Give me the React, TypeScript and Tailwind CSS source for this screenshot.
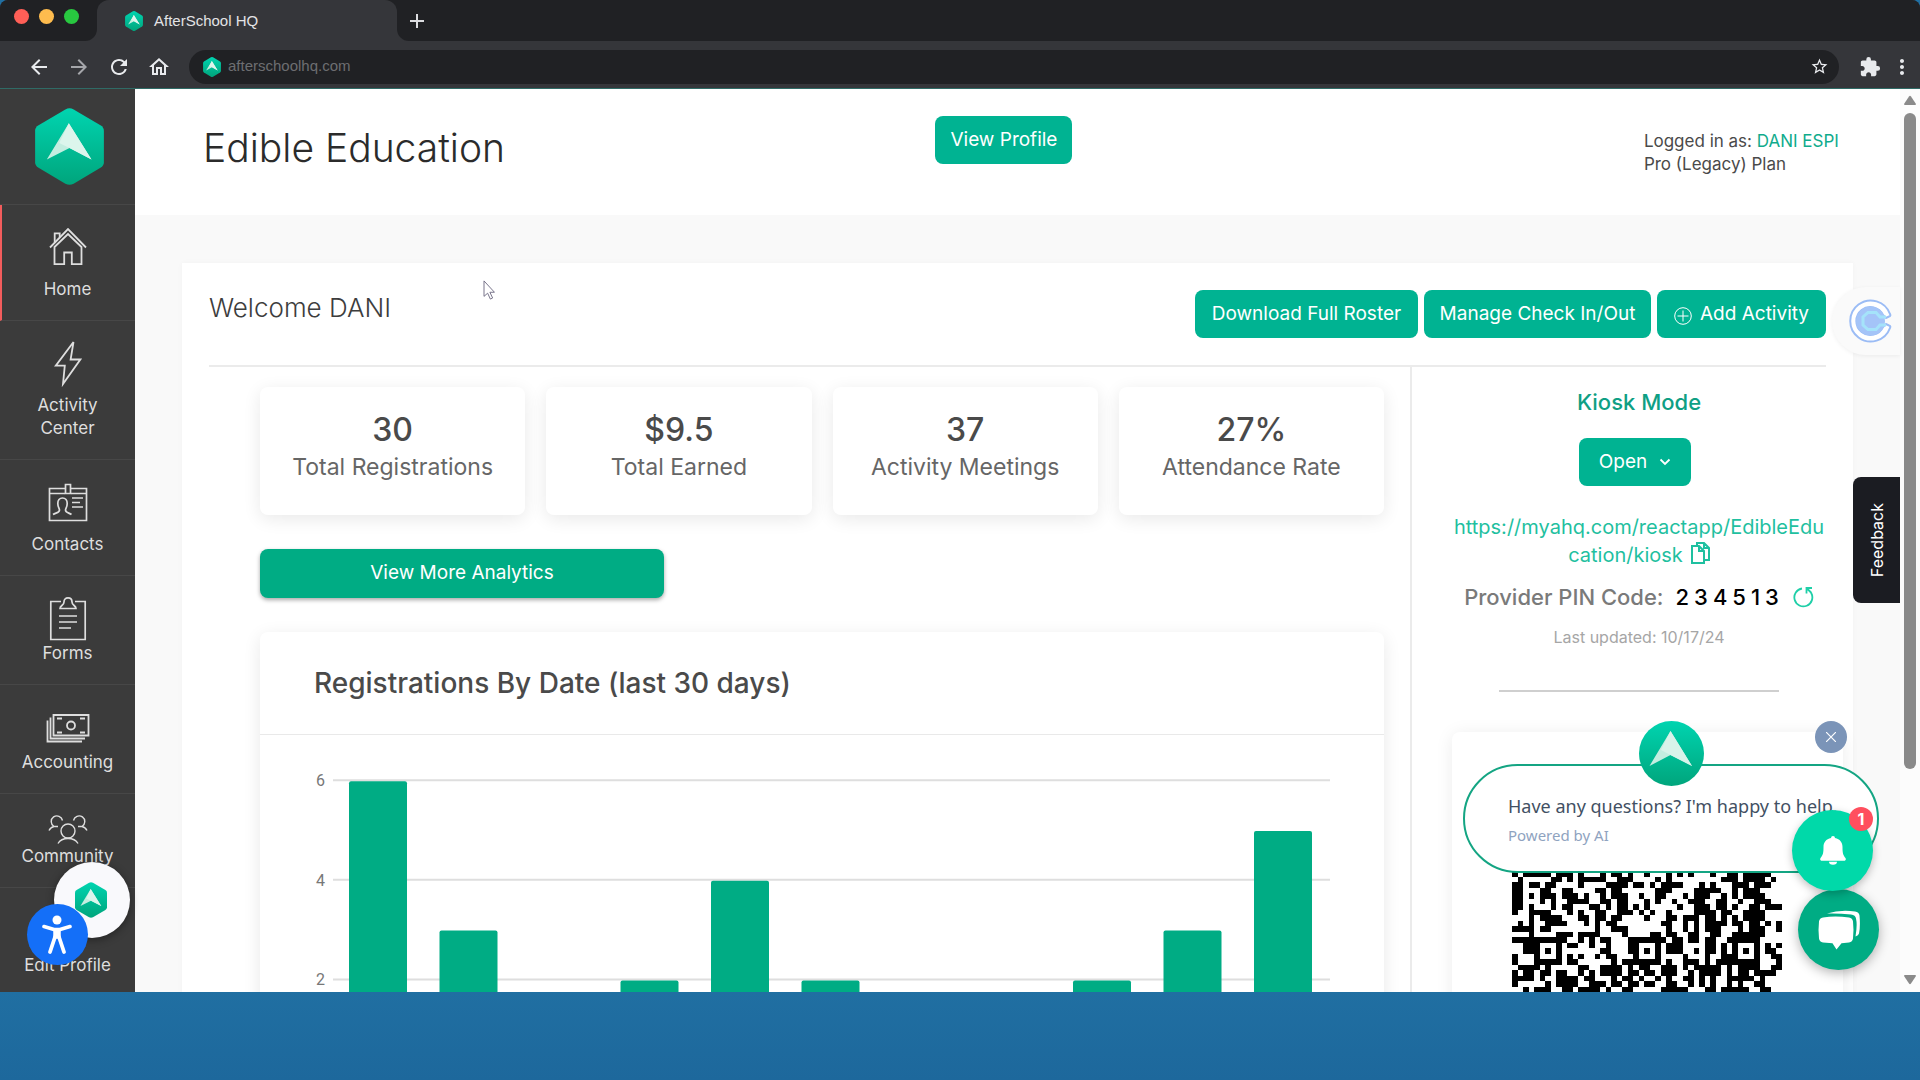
import type { ReactNode } from 'react';
import { MdArrowBack, MdArrowForward, MdExtension, MdMoreVert, MdOutlineHome, MdRefresh, MdStarBorder } from 'react-icons/md';

const navItems = [
  { label: 'Home', icon: <HomeIcon />, box: 'h-[53px]', active: true },
  { label: 'Activity Center', icon: <BoltIcon />, box: 'h-[53px]' },
  { label: 'Contacts', icon: <ContactsIcon />, box: 'h-[53px]' },
  { label: 'Forms', icon: <FormsIcon />, box: 'h-[46px]' },
  { label: 'Accounting', icon: <MoneyIcon />, box: 'h-[46px]' },
  { label: 'Community', icon: <CommunityIcon />, box: 'h-[31px]' },
  { label: 'Edit Profile', icon: <ProfileIcon />, box: 'h-[46px]' },
];

const stats = [
  { value: '30', label: 'Total Registrations' },
  { value: '$9.5', label: 'Total Earned' },
  { value: '37', label: 'Activity Meetings' },
  { value: '27%', label: 'Attendance Rate' },
];

const registrations = [6, 3, 0, 2, 4, 2, 0, 0, 2, 3, 5];

const qrRows = [
  '#.#####.###.#...#.##.#..#...#.#.#...#..##.#####..',
  '.#.....##.#.#####..###....#.#.........###.####.#..',
  '##.##.##....#....####.##.#.####...#.#...###.###..',
  '##...##..##....##.##......###....#####..#.###....',
  '##.#.###.###.#..#.###..#..##...#.###..#.#.####...',
  '##...#.#..####..##.##...#.#..#..###..##..#..###..',
  '##.#...#.##...##.#.##.#.#.....#..###.##.#..##.###',
  '#..####...#.#..##..###.#.#..#....####.##..####...',
  '...#.####...##.##.##....#...##.###.##.#.#.####...',
  '.#.#..####...#.#.##........##..#.#.####.##.##.#.#',
  '####.##........#..###.......#..#.#.###...#.###..#',
  '...#....###.####....#....##.##..##..##..######...',
  '##########..#.#.##...#######.##.##.##..######....',
  '..###...#.##..#..#...##...#.###....##.#.#...#.#.#',
  '..###.#.#.......##...##.#.#.###..#.##.#.#.#.#.##.',
  '#...#...#.#.#..#.##...#...#....#...#..###...#..##',
  '#...#####.##......#.#######.#..###.#.########...#',
  '.####.#.....##..####.#.##..###.#.#####.#.####..##',
  '#.##.##.##..#.#.####.##.##.###..#.####.#.##.####.',
  '####.#..####.##...#.##.#..#.#..##.#.#..#####.#...',
  '#.....#.####..###.##.##.##..##..#.#.#..#.#..##...',
  '..#.###..##.####.#..##.....#####...##.#####..##..',
];

function HomeIcon() {
  return (
    <svg width="38" height="42" viewBox="0 -2 38 42" fill="none" stroke="currentColor" strokeWidth="1.8">
      <path d="M1 20.500 19 2l18 18.500" />
      <path d="M5.500 20v17.200h9.700V25.500h7.600v11.700h9.700V20L19 7z" />
      <path d="M5.700 15.500V6.300h5v4" />
    </svg>
  );
}

function BoltIcon() {
  return (
    <svg width="28" height="46" viewBox="0 1 28 46" fill="none" stroke="currentColor" strokeWidth="1.800">
      <path d="M19.500 2 1.800 25.700h9L9 44l17.300-24.500h-9.700z" />
    </svg>
  );
}

function ContactsIcon() {
  return (
    <svg width="40" height="42" viewBox="0 0 40 42" fill="none" stroke="currentColor" strokeWidth="1.700">
      <path d="M17 8.500H1.500v32h37v-32H23M1.500 13.500H17M23 13.500h15.500" />
      <path d="M17.500 4.500h5v9h-5z" />
      <path d="M5 34.500c3-1.800 6.500-1.700 6.500-4.500 0-1.500-1.700-2.800-1.700-6.500 0-3 1.700-5.500 4.700-5.500s4.700 2.500 4.700 5.500c0 3.700-1.700 5-1.700 6.500 0 2.800 3.500 2.700 6 4.500M24 18h11M24 22.500h8M24 27h11" />
    </svg>
  );
}

function FormsIcon() {
  return (
    <svg width="38" height="45" viewBox="0 0 38 45" fill="none" stroke="currentColor" strokeWidth="1.700">
      <path d="M12 5.500H1.800v38h34.400v-38H26" />
      <path d="M11 12.500c0-3 4-3 4-6.500 0-2.500 1.500-4.200 4-4.200s4 1.700 4 4.200c0 3.500 4 3.500 4 6.500zM10 20h18M10 26h18M10 32h12" />
    </svg>
  );
}

function MoneyIcon() {
  return (
    <svg width="44" height="46" viewBox="0 0 44 46" fill="none" stroke="currentColor" strokeWidth="1.800">
      <path d="M7.500 10h35v20.500h-35z" />
      <path d="M4.500 12.500V33.500h34.500M1.500 15.500V36.500h34.500" />
      <circle cx="25" cy="20.500" r="4" />
      <path d="M11 13.500h5M34 13.500h5M11 27.500h5M34 27.500h5" />
    </svg>
  );
}

function CommunityIcon() {
  return (
    <svg width="40" height="31" viewBox="0 0 40 31" fill="none" stroke="currentColor" strokeWidth="1.400">
      <circle cx="20" cy="17" r="7" />
      <path d="M10 29.500c2-3.500 5-5 10-5s8 1.500 10 5M14.500 6.500A5.700 5.700 0 1 0 6 12.500c-2.500.5-4 2-5 4M25.500 6.500a5.700 5.700 0 1 1 8.500 6c2.500.5 4 2 5 4M6 12.500h4M34 12.500h-4" />
    </svg>
  );
}

function ProfileIcon() {
  return (
    <svg width="38" height="42" viewBox="0 0 38 42" fill="none" stroke="currentColor" strokeWidth="1.700">
      <circle cx="19" cy="12" r="9" />
      <path d="M8 41V32c0-5 4-8 11-8s11 3 11 8v9" />
    </svg>
  );
}

function Logo({ className }: { className: string }) {
  return (
    <svg className={className} viewBox="0 0 100 112" aria-hidden="true">
      <defs>
        <linearGradient id="hex" x1="0" y1="0" x2="0" y2="1">
          <stop offset="0" stopColor="#00d4b0" />
          <stop offset="1" stopColor="#00a57c" />
        </linearGradient>
      </defs>
      <path d="M44 2q6-3 12 0l39 23q5 3 5 8v46q0 5-5 8l-39 23q-6 3-12 0L5 87q-5-3-5-8V33q0-5 5-8z" fill="url(#hex)" />
      <path d="M49 22 82 75 50 58 17 75z" fill="#c4ede0" />
      <path d="M49 22 82 75 50 58 35 51z" fill="#dcf5ec" />
    </svg>
  );
}

function GreenButton({ className = '', children }: { className?: string; children: ReactNode }) {
  return (
    <button
      type="button"
      className={`flex h-12 items-center justify-center whitespace-nowrap rounded-lg bg-[#00b392] text-[19px] text-white ${className}`}
    >
      {children}
    </button>
  );
}

function BrowserBar() {
  return (
    <header className="overflow-hidden rounded-t-lg border-b border-[#2f6b66] bg-[#35363a] font-['Liberation_Sans',sans-serif]">
      <div className="flex h-[41px]">
        <div className="flex w-[97px] gap-[10px] rounded-br-xl bg-[#202124] pl-[14px] pt-[9px]">
          <span className="size-[15px] rounded-full bg-[#ff5f57]" />
          <span className="size-[15px] rounded-full bg-[#febc4e]" />
          <span className="size-[15px] rounded-full bg-[#28c840]" />
        </div>
        <div className="bg-[#202124]">
          <div className="flex h-full w-[300px] items-center gap-[11px] rounded-t-xl bg-[#35363a] pl-[28px] text-[15px] text-[#e3e3e5]">
            <Logo className="h-5 w-[18px]" />
            <span className="pt-[2px]">AfterSchool HQ</span>
          </div>
        </div>
        <div className="flex flex-1 rounded-bl-xl bg-[#202124]">
          <button type="button" aria-label="New tab" className="px-3 pt-px text-[#dcdde0]">
            <svg width="16" height="16" viewBox="0 0 16 16" stroke="currentColor" strokeWidth="2">
              <path d="M8 1v14M1 8h14" />
            </svg>
          </button>
        </div>
      </div>
      <div className="flex h-[47px] items-center pt-1 text-[#e8eaed]">
        <div className="flex w-[189px] items-center gap-4 pl-[27px]">
          <button type="button" aria-label="Back"><MdArrowBack size={24} /></button>
          <button type="button" aria-label="Forward" className="text-[#a5a6aa]"><MdArrowForward size={24} /></button>
          <button type="button" aria-label="Reload"><MdRefresh size={24} /></button>
          <button type="button" aria-label="Home"><MdOutlineHome size={24} /></button>
        </div>
        <div className="flex h-[34px] flex-1 items-center rounded-full bg-[#202124] pl-[14px] pr-[10px]">
          <Logo className="h-5 w-[18px]" />
          <input
            aria-label="Address"
            defaultValue="afterschoolhq.com"
            className="ml-[7px] flex-1 bg-transparent text-[15px] text-[#6d6e71] outline-none"
          />
          <button type="button" aria-label="Bookmark"><MdStarBorder size={19} /></button>
        </div>
        <button type="button" aria-label="Extensions" className="ml-5"><MdExtension size={22} /></button>
        <button type="button" aria-label="Menu" className="ml-[9px] mr-[6px]"><MdMoreVert size={24} /></button>
      </div>
    </header>
  );
}

function Sidebar() {
  return (
    <nav className="w-[135px] shrink-0 bg-[#3b3b3b] text-[#dedede]">
      <a href="#" aria-label="AfterSchool HQ" className="flex h-[116px] justify-center border-b border-[#474747] pl-1 pt-[19px]">
        <Logo className="h-[77px] w-[69px]" />
      </a>
      {navItems.map((item) => (
        <a
          key={item.label}
          href="#"
          className={`flex flex-col items-center border-b border-b-[#474747] px-4 pb-[19px] pt-5 text-center text-[17px] leading-[23px] ${
            item.active ? 'border-l-2 border-l-[#f25c5c] pl-[14px]' : ''
          }`}
        >
          <span className={item.box}>{item.icon}</span>
          {item.label}
        </a>
      ))}
    </nav>
  );
}

function RegistrationsChart() {
  return (
    <svg className="w-full" viewBox="0 0 1124 358" role="img" aria-label="Registrations by date">
      {[6, 4, 2].map((tick) => {
        const y = 344 - tick * 49.8;
        return (
          <g key={tick}>
            <path d={`M73 ${y}H1070`} stroke="#dedede" strokeWidth="2" />
            <text x="65" y={y + 6} textAnchor="end" className="fill-[#777777] font-[Roboto,sans-serif] text-[16px]">
              {tick}
            </text>
          </g>
        );
      })}
      {registrations.map((count, i) => (
        <rect key={i} x={89 + i * 90.5} y={345 - count * 49.8} width="58" height={count * 49.8} rx="2" fill="#00ac84" />
      ))}
    </svg>
  );
}

function Analytics() {
  return (
    <section className="flex-1 border-r-2 border-[#ebebeb] pl-[51px] pr-[26px] pt-5">
      <div className="grid grid-cols-4 gap-[21px]">
        {stats.map((stat) => (
          <div key={stat.label} className="h-32 rounded-lg bg-white pt-[21px] text-center shadow-[0_4px_18px_rgba(0,0,0,0.09)]">
            <p className="text-[32px] font-medium leading-[44px] text-[#4a4a4a]">{stat.value}</p>
            <p className="text-[23px] leading-[30px] text-[#666666]">{stat.label}</p>
          </div>
        ))}
      </div>
      <button
        type="button"
        className="mt-[34px] h-[49px] w-[404px] rounded-lg bg-[#00ac84] text-[19px] text-white shadow-[0_2px_4px_rgba(0,0,0,0.35)]"
      >
        View More Analytics
      </button>
      <div className="mt-[34px] rounded-lg bg-white shadow-[0_4px_18px_rgba(0,0,0,0.09)]">
        <h2 className="border-b border-[#e9e9e9] px-[54px] py-8 text-[28px] font-medium leading-[38px] text-[#4a4a4a]">
          Registrations By Date (last 30 days)
        </h2>
        <RegistrationsChart />
      </div>
    </section>
  );
}

function KioskPanel() {
  return (
    <section className="flex w-[414px] shrink-0 flex-col items-center pl-10">
      <h2 className="mt-[19px] text-[22px] font-medium leading-8 text-[#0f9f84]">Kiosk Mode</h2>
      <GreenButton className="mr-2 mt-5 w-28 gap-3">
        Open
        <svg width="12" height="8" viewBox="0 0 12 8" fill="none" stroke="currentColor" strokeWidth="1.800">
          <path d="m1.500 1.500 4.500 4.500 4.500-4.500" />
        </svg>
      </GreenButton>
      <a href="#" className="mt-[27px] text-center text-[20px] leading-7 text-[#1fc0a0]">
        https://myahq.com/reactapp/EdibleEdu
        <br />
        cation/kiosk
        <svg className="ml-2 inline-block align-[-2px]" width="19" height="22" viewBox="0 0 19 22" fill="none" stroke="currentColor" strokeWidth="2">
          <path d="M1 4h7l5 5v12H1zM6 4V1h7l5 5v12h-5M8 4v5h5M13 1v5h5" />
        </svg>
      </a>
      <div className="mt-3 flex items-center text-[22px] font-medium leading-8 text-[#7a7a7a]">
        Provider PIN Code:
        <span className="ml-3 flex gap-[5px] text-black">
          {'234513'.split('').map((digit, i) => (
            <span key={i}>{digit}</span>
          ))}
        </span>
        <button type="button" aria-label="Refresh PIN" className="ml-[14px] text-[#1fcfa8]">
          <svg width="21" height="22" viewBox="0 0 21 22" fill="none" stroke="currentColor" strokeWidth="1.800">
            <path d="M9 2.500a9 9 0 1 0 9.200 4.500" />
            <path d="M13.500 7.500V2h5.500M14 2.500l4.500 4.500" />
          </svg>
        </button>
      </div>
      <p className="mt-3 text-[16px] leading-6 text-[#a6a6a6]">Last updated: 10/17/24</p>
      <hr className="mt-[41px] w-[280px] border-t-2 border-[#cfcfcf]" />
      <div className="-mr-4 mt-10 flex w-[391px] justify-center rounded-lg bg-white pb-10 pt-[139px] shadow-[0_2px_18px_rgba(0,0,0,0.08)]">
        <svg width="270" height="121" viewBox="0 0 49 22" preserveAspectRatio="none" shapeRendering="crispEdges" role="img" aria-label="Kiosk QR code">
          {qrRows.map((row, y) =>
            row.split('').map((cell, x) => (cell === '#' ? <rect key={`${x}-${y}`} x={x} y={y} width="1" height="1" /> : null))
          )}
        </svg>
      </div>
    </section>
  );
}

function Dashboard() {
  return (
    <main className="min-w-0 flex-1 bg-[#f9f9f9]">
      <div className="grid h-[126px] grid-cols-[732fr_708fr_196fr] bg-white pl-[68px] pr-[60px] pt-[27px]">
        <h1 className="pt-[6px] text-[39px] font-light leading-[52px] text-[#2b2b2b]">Edible Education</h1>
        <div>
          <GreenButton className="w-[137px]">View Profile</GreenButton>
        </div>
        <p className="whitespace-nowrap pt-[14px] text-[17px] leading-[23px] text-[#4a4a4a]">
          Logged in as:{' '}
          <a href="#" className="text-[#10ab8c]">
            DANI ESPI
          </a>
          <br />
          Pro (Legacy) Plan
        </p>
      </div>
      <div className="mx-[47px] mt-12 bg-white px-[27px] pt-[27px] shadow-[0_0_6px_rgba(0,0,0,0.03)]">
        <div className="flex h-[77px] items-start gap-[6px] border-b-2 border-[#ebebeb]">
          <p className="flex-1 text-[26px] font-light leading-9 text-[#3d3d3d]">Welcome DANI</p>
          <GreenButton className="w-[223px]">Download Full Roster</GreenButton>
          <GreenButton className="w-[227px]">Manage Check In/Out</GreenButton>
          <GreenButton className="w-[169px] gap-2">
            <svg className="mt-1" width="18" height="18" viewBox="0 0 18 18" fill="none" stroke="currentColor" strokeWidth="1">
              <circle cx="9" cy="9" r="8.300" />
              <path d="M9 3.500v11M3.500 9h11" />
            </svg>
            Add Activity
          </GreenButton>
        </div>
        <div className="flex">
          <Analytics />
          <KioskPanel />
        </div>
      </div>
    </main>
  );
}

function Scrollbar() {
  return (
    <div className="flex w-5 shrink-0 flex-col items-center bg-[#fcfcfc] pb-[7px] pt-[6px]">
      <svg width="12" height="10" viewBox="0 0 12 10" fill="#8a8a8a">
        <path d="M5 1.500Q6 0 7 1.500L12 9q0 1-1 1H1Q0 10 0 9z" />
      </svg>
      <div className="mt-2 w-3 flex-[657] rounded-full bg-[#8a8a8a]" />
      <div className="flex-[206]" />
      <svg width="12" height="10" viewBox="0 0 12 10" fill="#8a8a8a">
        <path d="M5 8.500Q6 10 7 8.500L12 1q0-1-1-1H1Q0 0 0 1z" />
      </svg>
    </div>
  );
}

function ChatPrompt() {
  return (
    <div className="absolute bottom-[119px] right-[41px] h-[109px] w-[416px] rounded-full border-2 border-[#14a583] bg-white pl-[43px] pt-6 font-['Noto_Sans',sans-serif]">
      <p className="whitespace-nowrap text-[18px] leading-8 text-[#425063]">Have any questions? I&apos;m happy to help.</p>
      <p className="text-[15px] leading-[26px] text-[#8fa3bf]">Powered by AI</p>
      <svg className="absolute -top-[45px] left-[174px] size-[65px]" viewBox="0 0 65 65" aria-hidden="true">
        <defs>
          <linearGradient id="disc" x1="0" y1="0" x2="0" y2="1">
            <stop offset="0" stopColor="#00d4b0" />
            <stop offset="1" stopColor="#00a57c" />
          </linearGradient>
        </defs>
        <circle cx="32.500" cy="32.500" r="32.500" fill="url(#disc)" />
        <path d="M31.500 10 53 45 31.500 34 10.500 45z" fill="#c4ede0" />
        <path d="M31.500 10 53 45 31.500 34 22 29z" fill="#d8f3ea" />
      </svg>
      <button
        type="button"
        aria-label="Close"
        className="absolute -top-[45px] right-[30px] flex size-8 items-center justify-center rounded-full bg-[#7b94b8] text-white"
      >
        <svg width="10" height="10" viewBox="0 0 10 10" stroke="currentColor" strokeWidth="1.200">
          <path d="m0 0 10 10M10 0 0 10" />
        </svg>
      </button>
    </div>
  );
}

function Overlays() {
  return (
    <>
      <svg className="absolute left-[483px] top-[191px]" width="12" height="20" viewBox="0 0 13 22" fill="#fff" stroke="#6c6880" aria-hidden="true">
        <path d="M1 1v17l4-3.500 3 6.500 2.500-1.200-3-6.300h5z" />
      </svg>

      <div className="absolute right-5 top-[198px] flex h-[68px] w-[68px] items-center rounded-l-full bg-[#fafafa] pl-[17px] shadow-[0_1px_4px_rgba(0,0,0,0.06)]">
        <svg width="44" height="44" viewBox="0 0 44 44" fill="none" aria-hidden="true">
          <path d="M41 15A20.500 20.500 0 1 0 41 29q1-2-1-2.500l-3-1.500-3 3a14 14 0 1 1 0-12l3 3 3-1.500q2-.5 1-2.500z" stroke="#9bbcf5" strokeWidth="2" fill="#fff" />
          <circle cx="21.500" cy="22" r="14.500" fill="#a4c4f8" />
          <path d="M37 18h-6l-4-4.500h-8l-5 4.500v8l5 4.500h8l4-4.500h6" stroke="#a5e3fa" strokeWidth="3" />
        </svg>
      </div>

      <button
        type="button"
        className="absolute right-5 top-[388px] flex h-[126px] w-[47px] items-center justify-center rounded-l-lg bg-[#1b1c22] text-[16px] text-white"
      >
        <span className="rotate-180 [writing-mode:vertical-rl]">Feedback</span>
      </button>

      <ChatPrompt />

      <button
        type="button"
        aria-label="Open chat"
        className="absolute bottom-[22px] right-[41px] flex size-[81px] items-center justify-center rounded-full bg-[#00ac84] shadow-[0_3px_12px_rgba(0,0,0,0.3)]"
      >
        <svg width="42" height="40" viewBox="0 0 42 40" fill="#fff">
          <path d="M5 7.500Q17 5.500 31 7.500q3.500.5 4 4 1 9 0 17-.5 3.500-4 4l-7.500.8L18.500 39.500l-4-6.200L5 32.500q-3.500-.5-4-4-1-8 0-17 .5-3.500 4-4z" />
          <path d="M9 3.500Q22-.5 37 1.500q4 .5 4.500 4 1 11-.5 18-.5 2-3.500 3Q39.500 15 38 8.500q-.5-3.500-5-4Q20 3 9 3.500z" />
        </svg>
      </button>
      <button
        type="button"
        aria-label="Notifications"
        className="absolute bottom-[101px] right-[47px] flex size-[81px] items-center justify-center rounded-full bg-[#00d9a9] text-white shadow-[0_3px_8px_rgba(0,0,0,0.25)]"
      >
        <svg width="26" height="29" viewBox="0 0 26 29" fill="currentColor" aria-hidden="true">
          <path d="M11 2a2 2 0 0 1 4 0c5 1 7.500 4.500 7.500 9 0 6 .5 8 3 11 .8 1.500.2 2.800-1.500 2.800H2C.3 24.800-.3 23.500.500 22c2.500-3 3-5 3-11C3.500 6.500 6 3 11 2zM9 25.800h8a4 3 0 0 1-8 0z" />
        </svg>
        <span className="absolute -top-[3px] right-0 size-6 rounded-full bg-[#ff4f5e] text-[16px] font-bold leading-6">1</span>
      </button>

      <button
        type="button"
        aria-label="Help"
        className="absolute bottom-[54px] left-[54px] flex size-[76px] items-center justify-center rounded-full bg-[#f9f9fc] pr-[2px] shadow-[0_2px_8px_rgba(0,0,0,0.4)]"
      >
        <Logo className="h-9 w-8" />
      </button>
      <button
        type="button"
        aria-label="Accessibility"
        className="absolute bottom-[27px] left-[27px] flex size-[61px] items-center justify-center rounded-full bg-[#146ff8] pr-[2px]"
      >
        <svg width="30" height="40" viewBox="0 0 30 40" fill="#fff" stroke="#fff" strokeLinecap="round" strokeLinejoin="round">
          <circle cx="15" cy="5" r="4.500" stroke="none" />
          <path d="M2 11.500 12 14.500h6l10-3" fill="none" strokeWidth="3.600" />
          <path d="M12 14.500h6v8.500h-6z" strokeWidth="1.500" />
          <path d="M13 22 8 37M17 22l5 15" fill="none" strokeWidth="3.800" />
        </svg>
      </button>
    </>
  );
}

export default function App() {
  return (
    <div className="flex h-screen flex-col bg-[#206fa2] font-[Inter,sans-serif]">
      <BrowserBar />
      <div className="relative flex min-h-0 flex-1 overflow-hidden bg-white">
        <Sidebar />
        <Dashboard />
        <Scrollbar />
        <Overlays />
      </div>
      <footer className="h-[88px] shrink-0 bg-linear-to-b from-[#206fa2] to-[#1d689c]" />
    </div>
  );
}
